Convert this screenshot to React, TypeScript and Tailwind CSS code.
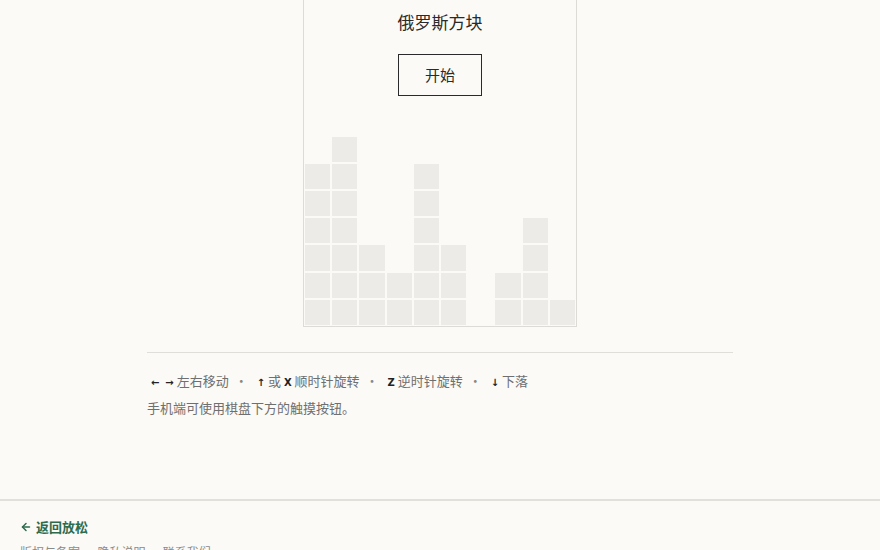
import { ArrowLeft } from 'lucide-react'

const ROWS = 12
const COLS = 10

// how many cells are stacked in each column, counted from the bottom row
const columnHeights = [6, 7, 3, 2, 6, 3, 0, 2, 4, 1]

function isFilled(row: number, col: number) {
  const fromBottom = ROWS - row
  return fromBottom <= columnHeights[col]
}

function Key({ children }: { children: React.ReactNode }) {
  return (
    <span className="font-['DejaVu_Sans',sans-serif] text-[10px] font-bold text-[#222]">{children}</span>
  )
}

function Dot() {
  return <span className="mx-[6px] text-[#888]">·</span>
}

export default function App() {
  const cells = []
  for (let r = 0; r < ROWS; r++) {
    for (let c = 0; c < COLS; c++) {
      cells.push(
        <div key={`${r}-${c}`} className="p-px">
          <div className={isFilled(r, c) ? 'h-full w-full bg-[#ecebe8]' : 'h-full w-full'} />
        </div>
      )
    }
  }

  return (
    <div className="min-h-[550px] bg-[#fbfaf6] font-['Noto_Sans_CJK_SC',sans-serif] text-[#333]">
      <main className="flex flex-col items-center">
        {/* Board */}
        <div className="relative w-[274px] border-x border-b border-[#dddbd6]">
          <div className="grid h-[326px] grid-cols-10 grid-rows-12">{cells}</div>
          <div className="absolute inset-x-0 top-0 flex flex-col items-center pt-[10px]">
            <h1 className="text-[17px] leading-[24px] text-[#2a2a2a]">俄罗斯方块</h1>
            <button className="mt-[20px] h-[42px] w-[84px] border border-[#2a2a2a] text-[15px] text-[#2a2a2a]">
              开始
            </button>
          </div>
        </div>

        {/* Help */}
        <div className="mt-[25px] w-[586px] border-t border-[#e0ded9] pt-[15px] text-[13px] leading-[25px] text-[#6f6f6f]">
          <p className="pl-[4px]">
            <Key>←</Key> <span className="ml-[3px]"><Key>→</Key></span> <span>左右移动</span>
            <Dot />
            <span className="ml-[3px]"><Key>↑</Key></span> 或 <Key>X</Key> 顺时针旋转
            <Dot />
            <span className="ml-[3px]"><Key>Z</Key></span> 逆时针旋转
            <Dot />
            <span className="ml-[3px]"><Key>↓</Key></span> 下落
          </p>
          <p>手机端可使用棋盘下方的触摸按钮。</p>
        </div>
      </main>

      {/* Footer */}
      <footer className="mt-[79px] border-t-2 border-[#e2e0db] px-[20px] pt-[16px]">
        <a className="flex items-center gap-[4px] text-[13px] font-bold leading-[20px] text-[#2e6b4c]">
          <ArrowLeft size={12} strokeWidth={3} />
          返回放松
        </a>
        <div className="mt-[6px] text-[12px] text-[#8a8a8a]">版权与备案 · 隐私说明 · 联系我们</div>
      </footer>
    </div>
  )
}
